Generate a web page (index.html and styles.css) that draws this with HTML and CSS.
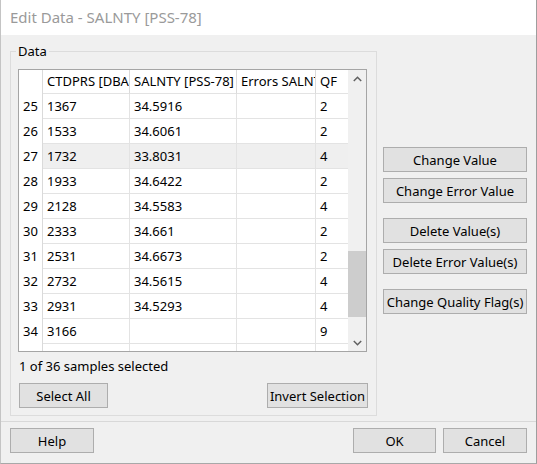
FILE: index.html
```html
<!DOCTYPE html>
<html>
<head>
<meta charset="utf-8">
<link rel="stylesheet" href="styles.css">
</head>
<body>
<div class="window">
  <div class="titlebar">Edit Data - SALNTY [PSS-78]</div>
  <div class="main">
    <fieldset class="group">
      <legend>Data</legend>
      <div class="table">
        <div class="cells">
          <div class="row header">
            <div class="c num"></div>
            <div class="c c1">CTDPRS [DBAR]</div>
            <div class="c c2">SALNTY [PSS-78]</div>
            <div class="c c3">Errors SALNTY</div>
            <div class="c c4">QF</div>
          </div>
          <div class="row"><div class="c num">25</div><div class="c c1">1367</div><div class="c c2">34.5916</div><div class="c c3"></div><div class="c c4">2</div></div>
          <div class="row"><div class="c num">26</div><div class="c c1">1533</div><div class="c c2">34.6061</div><div class="c c3"></div><div class="c c4">2</div></div>
          <div class="row selected"><div class="c num">27</div><div class="c c1">1732</div><div class="c c2">33.8031</div><div class="c c3"></div><div class="c c4">4</div></div>
          <div class="row"><div class="c num">28</div><div class="c c1">1933</div><div class="c c2">34.6422</div><div class="c c3"></div><div class="c c4">2</div></div>
          <div class="row"><div class="c num">29</div><div class="c c1">2128</div><div class="c c2">34.5583</div><div class="c c3"></div><div class="c c4">4</div></div>
          <div class="row"><div class="c num">30</div><div class="c c1">2333</div><div class="c c2">34.661</div><div class="c c3"></div><div class="c c4">2</div></div>
          <div class="row"><div class="c num">31</div><div class="c c1">2531</div><div class="c c2">34.6673</div><div class="c c3"></div><div class="c c4">2</div></div>
          <div class="row"><div class="c num">32</div><div class="c c1">2732</div><div class="c c2">34.5615</div><div class="c c3"></div><div class="c c4">4</div></div>
          <div class="row"><div class="c num">33</div><div class="c c1">2931</div><div class="c c2">34.5293</div><div class="c c3"></div><div class="c c4">4</div></div>
          <div class="row"><div class="c num">34</div><div class="c c1">3166</div><div class="c c2"></div><div class="c c3"></div><div class="c c4">9</div></div>
          <div class="row"><div class="c num"></div><div class="c c1"></div><div class="c c2"></div><div class="c c3"></div><div class="c c4"></div></div>
        </div>
        <div class="scrollbar">
          <div class="arrow"><svg width="9" height="6" viewBox="0 0 9 6"><polyline points="0.8,5 4.5,1.3 8.2,5" fill="none" stroke="#606060" stroke-width="1.5"/></svg></div>
          <div class="track"><div class="thumb"></div></div>
          <div class="arrow"><svg width="9" height="6" viewBox="0 0 9 6"><polyline points="0.8,1 4.5,4.7 8.2,1" fill="none" stroke="#606060" stroke-width="1.5"/></svg></div>
        </div>
      </div>
      <div class="status">1 of 36 samples selected</div>
      <div class="sel-buttons">
        <button class="btn select-all">Select All</button>
        <button class="btn invert">Invert Selection</button>
      </div>
    </fieldset>
    <div class="side">
      <button class="btn">Change Value</button>
      <button class="btn">Change Error Value</button>
      <button class="btn spaced">Delete Value(s)</button>
      <button class="btn">Delete Error Value(s)</button>
      <button class="btn spaced">Change Quality Flag(s)</button>
    </div>
  </div>
  <div class="sep"></div>
  <div class="footer">
    <button class="btn help">Help</button>
    <div class="right-buttons">
      <button class="btn ok">OK</button>
      <button class="btn cancel">Cancel</button>
    </div>
  </div>
</div>
</body>
</html>
```
FILE: styles.css
```css
html, body {
  margin: 0;
  padding: 0;
}
body {
  font-family: "Noto Sans", "Open Sans", sans-serif;
  font-size: 13px;
  color: #000;
  background: #f0f0f0;
}
.window {
  width: 537px;
  height: 464px;
  box-sizing: border-box;
  background: #f0f0f0;
  border-left: 1px solid #c4c4c4;
  border-right: 1px solid #9e9e9e;
  border-bottom: 1px solid #a8a8a8;
  overflow: hidden;
}
.titlebar {
  height: 35px;
  line-height: 35px;
  background: #fff;
  padding-left: 9px;
  font-size: 15px;
  color: #9a9a9a;
}
.main {
  display: flex;
  align-items: flex-start;
  padding: 8px 0 0 9px;
}
.group {
  margin: 0;
  width: 367px;
  height: 373px;
  box-sizing: border-box;
  border: 1px solid #dcdcdc;
  padding: 0 8px 8px 7px;
  min-width: 0;
}
.group legend {
  padding: 0 2px;
  margin-left: -2px;
  font-size: 13px;
  line-height: 16px;
}
.table {
  margin-top: 10px;
  width: 349px;
  height: 283px;
  box-sizing: border-box;
  border: 1px solid #a5a5a5;
  background: #fff;
  display: flex;
}
.cells {
  flex: 1;
  overflow: hidden;
}
.row {
  display: flex;
  height: 25px;
}
.row.header {
  height: 24px;
}
.c {
  box-sizing: border-box;
  padding-left: 4px;
  border-right: 1px solid #e3e3e3;
  border-bottom: 1px solid #e3e3e3;
  line-height: 24px;
  white-space: nowrap;
  overflow: hidden;
  flex: none;
}
.header .c {
  line-height: 23px;
  border-right-color: #dadada;
}
.c.num {
  width: 24px;
  border-bottom: none;
  border-right-color: #dadada;
}
.c1 { width: 87px; }
.c2 { width: 107px; }
.c3 { width: 79px; }
.c4 { width: 32px; border-right: none; }
.selected .c1, .selected .c2, .selected .c3, .selected .c4 {
  background: #efefef;
}
.scrollbar {
  width: 18px;
  flex: none;
  background: #f0f0f0;
  display: flex;
  flex-direction: column;
}
.arrow {
  height: 17px;
  display: flex;
  align-items: center;
  justify-content: center;
  flex: none;
}
.track {
  flex: 1;
}
.thumb {
  margin-top: 164px;
  height: 66px;
  background: #cdcdcd;
}
.status {
  margin-top: 6px;
  line-height: 16px;
  padding-left: 1px;
}
.sel-buttons {
  margin-top: 9px;
  display: flex;
  justify-content: space-between;
}
.btn {
  font-family: "Noto Sans", "Open Sans", sans-serif;
  font-size: 13px;
  color: #000;
  background: #e1e1e1;
  border: 1px solid #adadad;
  height: 25px;
  padding: 0;
  margin: 0;
  box-sizing: border-box;
  line-height: 22px;
}
.select-all { width: 89px; margin-left: 1px; }
.invert { width: 101px; }
.side {
  margin-left: 6px;
  margin-top: 104px;
  width: 144px;
  display: flex;
  flex-direction: column;
  gap: 6px;
}
.side .btn.spaced {
  margin-top: 9px;
}
.sep {
  margin-top: 5px;
  border-top: 1px solid #d8d8d8;
}
.footer {
  display: flex;
  justify-content: space-between;
  padding: 6px 9px 0 9px;
}
.help { width: 84px; }
.right-buttons {
  display: flex;
  gap: 7px;
}
.ok { width: 83px; }
.cancel { width: 84px; }
```
